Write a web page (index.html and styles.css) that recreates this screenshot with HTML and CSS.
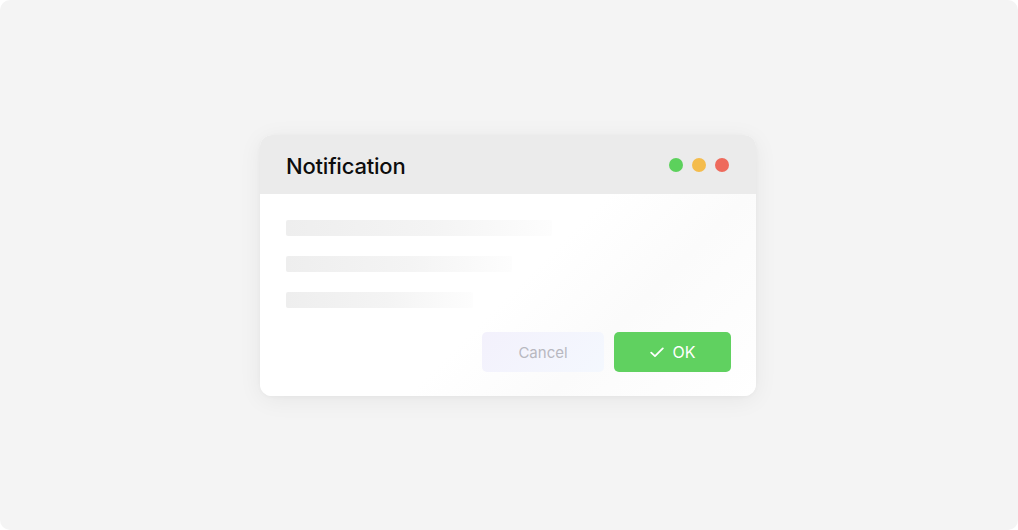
FILE: index.html
```html
<!DOCTYPE html>
<html>
<head>
<meta charset="utf-8">
<link rel="stylesheet" href="styles.css">
</head>
<body>
<div class="stage">
  <div class="dialog">
    <div class="header">
      <div class="title">Notification</div>
      <div class="dots">
        <span class="dot green"></span>
        <span class="dot yellow"></span>
        <span class="dot red"></span>
      </div>
    </div>
    <div class="body">
      <div class="lines">
        <div class="line l1"></div>
        <div class="line l2"></div>
        <div class="line l3"></div>
      </div>
      <div class="actions">
        <button class="btn cancel">Cancel</button>
        <button class="btn ok">
          <svg class="check" width="14" height="11" viewBox="0 0 14 11"><path d="M1.2 5.6 L5 9.2 L12.8 1.4" fill="none" stroke="#fff" stroke-width="1.8" stroke-linecap="round" stroke-linejoin="round"/></svg>
          <span>OK</span>
        </button>
      </div>
    </div>
  </div>
</div>
</body>
</html>
```

FILE: styles.css
```css
html, body {
  margin: 0;
  padding: 0;
  background: #ffffff;
}
body {
  font-family: Inter, "Noto Sans", sans-serif;
}
.stage {
  width: 1018px;
  height: 530px;
  background: #f4f4f4;
  border-radius: 10px;
  display: flex;
  align-items: center;
  justify-content: center;
  padding-right: 2px;
  box-sizing: border-box;
}
.dialog {
  width: 496px;
  height: 261px;
  margin-top: 1px;
  background: #ffffff;
  border-radius: 12px;
  overflow: hidden;
  box-shadow: 0 4px 24px rgba(0, 0, 0, 0.06), 0 1px 4px rgba(0, 0, 0, 0.03);
  display: flex;
  flex-direction: column;
}
.header {
  height: 59px;
  flex: none;
  background: #ebebeb;
  display: flex;
  align-items: center;
  justify-content: space-between;
  padding: 0 27px 0 26px;
}
.title {
  font-size: 22px;
  font-weight: 500;
  color: #0d0d0d;
  letter-spacing: -0.2px;
  margin-top: 2px;
}
.dots {
  display: flex;
  gap: 9px;
  margin-top: 1px;
}
.dot {
  width: 14px;
  height: 14px;
  border-radius: 50%;
  display: block;
}
.green { background: #5cd15c; }
.yellow { background: #f4bc4c; }
.red { background: #ee6a5c; }
.body {
  flex: 1;
  display: flex;
  flex-direction: column;
  justify-content: space-between;
  padding: 26px 25px 24px 26px;
  background: linear-gradient(135deg, #ffffff 50%, #fbfbfb 70%, #ffffff 100%);
}
.lines {
  display: flex;
  flex-direction: column;
  gap: 20px;
}
.line {
  height: 16px;
  border-radius: 2px;
  background: linear-gradient(90deg, #eeeeee 0%, #f4f4f4 55%, #fdfdfd 100%);
}
.l1 { width: 266px; }
.l2 { width: 226px; }
.l3 { width: 187px; }
.actions {
  display: flex;
  justify-content: flex-end;
  gap: 10px;
}
.btn {
  height: 40px;
  border: none;
  border-radius: 5px;
  font-family: Inter, "Noto Sans", sans-serif;
  font-size: 15px;
  display: flex;
  align-items: center;
  justify-content: center;
  padding: 0;
}
.cancel {
  width: 122px;
  color: #b8b8c0;
  background: linear-gradient(135deg, #f3f1fc 0%, #f4f8fe 100%);
}
.ok {
  width: 117px;
  color: #ffffff;
  background: #60d160;
  gap: 9px;
  font-weight: 400;
  font-size: 16px;
}
.check {
  display: block;
  margin-top: 1px;
}
```
